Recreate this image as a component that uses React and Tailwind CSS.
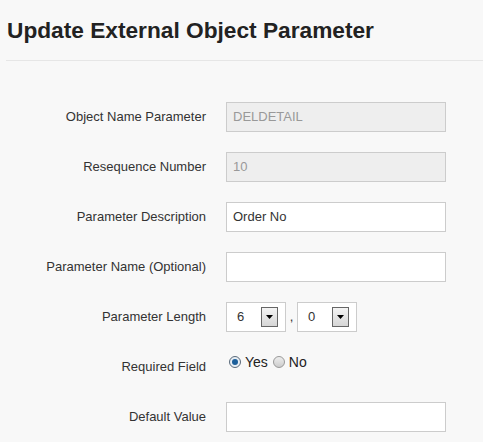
import React from 'react';

const labelCls = 'w-[206px] shrink-0 text-right text-[13px] text-[#333]';

const Row = ({ label, children }) => (
  <div className="flex items-center h-[30px]">
    <div className={labelCls}>{label}</div>
    <div className="ml-[20px] flex items-center">{children}</div>
  </div>
);

const TextBox = ({ value = '', disabled }) => (
  <div
    className={`w-[220px] h-[30px] border border-[#ccc] flex items-center px-[6px] text-[13px] ${
      disabled ? 'bg-[#eeeeee] text-[#999]' : 'bg-white text-[#333]'
    }`}
  >
    {value}
  </div>
);

const Select = ({ value }) => (
  <div className="w-[60px] h-[30px] border border-[#ccc] bg-white flex items-center justify-between pl-[10px] pr-[7px] text-[13px] text-[#333]">
    <span>{value}</span>
    <div className="w-[17px] h-[20px] border border-[#666] bg-gradient-to-b from-[#f4f4f4] to-[#d6d6d6] flex items-center justify-center">
      <svg width="7" height="4" viewBox="0 0 7 4">
        <path d="M0 0h7L3.5 4z" fill="#000" />
      </svg>
    </div>
  </div>
);

const Radio = ({ checked, label }) => (
  <label className="flex items-center gap-[4px] text-[14px] text-[#222]">
    <span
      className={`w-[12px] h-[12px] rounded-full border flex items-center justify-center ${
        checked ? 'border-[#5a6a7a] bg-[#e8eef4]' : 'border-[#999] bg-gradient-to-b from-[#eee] to-[#ccc]'
      }`}
    >
      {checked && <span className="w-[6px] h-[6px] rounded-full bg-[#1c5f9a]" />}
    </span>
    <span className="leading-none">{label}</span>
  </label>
);

export default function App() {
  return (
    <div
      className="w-[483px] h-[442px] overflow-hidden bg-[#f8f8f8]"
      style={{ fontFamily: '"Liberation Sans", Arial, sans-serif' }}
    >
      <div className="pl-[6px]">
        <h1 className="pt-[16px] pb-[16px] pl-[1px] text-[22.7px] font-bold text-[#222] leading-[28px]">
          Update External Object Parameter
        </h1>
        <div className="border-t border-[#e6e6e6]" />
      </div>

      <div className="pt-[41px] flex flex-col gap-[20px]">
        <Row label="Object Name Parameter">
          <TextBox value="DELDETAIL" disabled />
        </Row>
        <Row label="Resequence Number">
          <TextBox value="10" disabled />
        </Row>
        <Row label="Parameter Description">
          <TextBox value="Order No" />
        </Row>
        <Row label="Parameter Name (Optional)">
          <TextBox />
        </Row>
        <Row label="Parameter Length">
          <Select value="6" />
          <span className="w-[11px] text-center text-[13px] text-[#333]">,</span>
          <Select value="0" />
        </Row>
        <div className="flex h-[30px] items-center">
          <div className={labelCls}>Required Field</div>
          <div className="ml-[23px] flex gap-[5px] self-start pt-[3px]">
            <Radio checked label="Yes" />
            <Radio label="No" />
          </div>
        </div>
        <Row label="Default Value">
          <TextBox />
        </Row>
      </div>
    </div>
  );
}
